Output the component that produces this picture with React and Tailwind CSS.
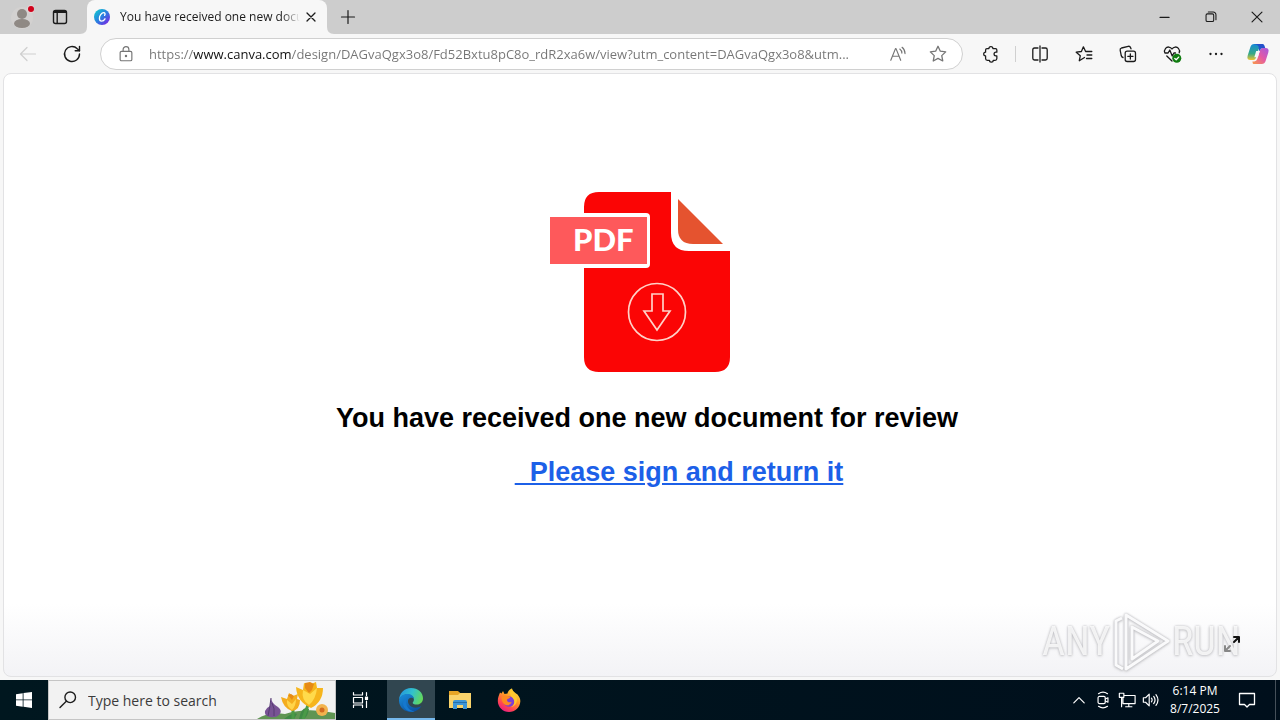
import React from "react";

const line = { fill: "none", stroke: "currentColor", strokeLinecap: "round", strokeLinejoin: "round" };

function Icon({ children, size = 20, width = 1.2, className = "" }) {
  return (
    <svg viewBox="0 0 20 20" width={size} height={size} strokeWidth={width} className={"shrink-0 " + className} aria-hidden="true" {...line}>
      {children}
    </svg>
  );
}

function IconButton({ label, className = "", children }) {
  return (
    <button type="button" aria-label={label} className={"flex shrink-0 items-center justify-center " + className}>
      {children}
    </button>
  );
}

function TabBar() {
  return (
    <header className="flex h-[34px] shrink-0 items-stretch bg-[#cdcdcd] text-[#1b1b1b]">
      <IconButton label="Profile" className="w-11">
        <svg viewBox="0 0 24 28" width="24" height="28" aria-hidden="true">
          <circle cx="12" cy="15" r="11" fill="#d3d1d0" />
          <circle cx="12" cy="11" r="5" fill="#8f8984" />
          <ellipse cx="12" cy="20.500" rx="8" ry="4.500" fill="#8f8984" />
          <circle cx="21" cy="6" r="4" fill="#e3d3d3" />
          <circle cx="21" cy="6" r="3" fill="#d0021b" />
        </svg>
      </IconButton>
      <IconButton label="Tab actions menu" className="w-[33px] pr-px">
        <Icon width={1.4}>
          <rect x="3.500" y="3.500" width="13" height="13" rx="2" />
          <path d="M4 5h12" strokeWidth="2" />
          <path d="M7.200 6v10" />
        </Icon>
      </IconButton>
      <div className="flex w-[260px] items-stretch">
        <svg viewBox="0 0 10 34" width="10" height="34" className="shrink-0" aria-hidden="true">
          <path d="M10 34H3q7 0 7-7z" fill="#f7f7f7" />
        </svg>
        <div className="flex flex-1 items-center rounded-t-lg bg-[#f7f7f7] pl-[7px]">
          <svg viewBox="0 0 16 16" width="16" height="16" className="shrink-0" aria-hidden="true">
            <defs>
              <linearGradient id="canva" x1="0" y1="0.200" x2="0.800" y2="1">
                <stop offset="0" stopColor="#12c2d1" />
                <stop offset="0.500" stopColor="#2b7de0" />
                <stop offset="1" stopColor="#7628e4" />
              </linearGradient>
            </defs>
            <circle cx="8" cy="8" r="8" fill="url(#canva)" />
            <path d="M10.600 6.400c.8-1 .6-2.700-.9-2.700-2.300 0-4.300 3-4.300 5.500 0 1.700.9 2.900 2.300 2.900 1.500 0 2.600-1.100 3.300-2.300" fill="none" stroke="#fff" strokeWidth="1.300" strokeLinecap="round" />
          </svg>
          <span className="ml-2.5 w-[180px] overflow-hidden whitespace-nowrap [mask-image:linear-gradient(90deg,#000_90%,transparent)] font-['Open_Sans','Noto_Sans',sans-serif] text-[12px] leading-4">
            You have received one new docum
          </span>
          <IconButton label="Close tab" className="ml-px h-5 w-5">
            <Icon size={16} width={1.6}><path d="M5 5l10 10M15 5L5 15" /></Icon>
          </IconButton>
        </div>
        <svg viewBox="0 0 10 34" width="10" height="34" className="shrink-0" aria-hidden="true">
          <path d="M0 34h7q-7 0-7-7z" fill="#f7f7f7" />
        </svg>
      </div>
      <IconButton label="New tab" className="w-[22px]">
        <Icon><path d="M3.500 10h13M10 3.500v13" /></Icon>
      </IconButton>
      <div className="ml-auto flex">
        <IconButton label="Minimize" className="w-[46px]">
          <Icon size={18} width={1.3}><path d="M4.500 10.500h10" /></Icon>
        </IconButton>
        <IconButton label="Restore" className="w-[46px]">
          <Icon size={18} width={1.2}>
            <rect x="4.500" y="6.500" width="8.500" height="8.500" rx="1.500" />
            <path d="M7 4.500h5.500a3 3 0 0 1 3 3V13" />
          </Icon>
        </IconButton>
        <IconButton label="Close" className="w-[46px]">
          <Icon size={18} width={1.3}><path d="M4.500 4.500l11 11M15.500 4.500l-11 11" /></Icon>
        </IconButton>
      </div>
    </header>
  );
}

const star = "M10 2.300l2.350 4.900 5.350.7-3.950 3.700 1 5.350L10 14.400l-4.750 2.550 1-5.350L2.300 7.900l5.350-.7z";

function Toolbar() {
  return (
    <nav className="flex h-[39px] shrink-0 items-center bg-[#f7f7f7] pt-px text-[#1b1b1b]">
      <IconButton label="Back" className="ml-1.5 w-11 text-[#cfcfcf]">
        <Icon><path d="M17.500 10h-15M9 3.500L2.500 10 9 16.500" /></Icon>
      </IconButton>
      <IconButton label="Refresh" className="w-11">
        <Icon width={1.4}>
          <path d="M17.500 10a7.500 7.500 0 1 1-2.200-5.300l2.200 2.100" />
          <path d="M17.500 2.500v4.300h-4.300" />
        </Icon>
      </IconButton>
      <div className="ml-1.5 flex h-8 min-w-0 flex-1 items-center rounded-full border border-[#d0d0d0] bg-white text-[#757575]">
        <IconButton label="View site information" className="ml-[15px] w-5">
          <Icon size={18} width={1.3}>
            <rect x="3.500" y="7" width="13" height="10.500" rx="1.500" />
            <path d="M6.800 7V5a3.200 3.200 0 0 1 6.400 0v2" />
            <circle cx="10" cy="12.300" r=".7" fill="currentColor" />
          </Icon>
        </IconButton>
        <input
          type="text"
          aria-label="Address"
          readOnly
          value="https://www.canva.com/design/DAGvaQgx3o8/Fd52Bxtu8pC8o_rdR2xa6w/view?utm_content=DAGvaQgx3o8&utm..."
          className="ml-[13px] min-w-0 flex-1 bg-[linear-gradient(90deg,#757575_44px,#111_44px,#111_142px,#757575_142px)] bg-clip-text font-['Open_Sans','Noto_Sans',sans-serif] text-[13px] leading-5 text-transparent outline-none"
        />
        <IconButton label="Read aloud" className="w-10">
          <Icon size={18} width={1.3}>
            <path d="M2 17L7.200 4h.6L13 17M4 12.500h7" />
            <path d="M12 4.500q2.300 1.800 2.300 4.500M14.500 2.500q3.300 2.600 3.300 7" />
          </Icon>
        </IconButton>
        <IconButton label="Add this page to favorites" className="mr-1 w-10">
          <Icon width={1.3}><path d={star} /></Icon>
        </IconButton>
      </div>
      <IconButton label="Extensions" className="ml-1.5 w-11">
        <Icon size={18} width={1.4}>
          <path d="M5.500 4h2.200a2.200 2.200 0 0 1 4.400 0H15q1.500 0 1.500 1.500V8h-1a2.100 2.100 0 0 0 0 4.200h1V15q0 2-2 2h-2a2.100 2.100 0 0 1-4.200 0H6q-2 0-2-2v-2.800a2.100 2.100 0 0 1 0-4.200V5.500q0-1.500 1.500-1.500z" />
        </Icon>
      </IconButton>
      <span className="ml-0.5 h-4 w-px bg-[#d0d0d0]" />
      <IconButton label="Split screen" className="ml-0.5 w-11">
        <Icon width={1.3}>
          <path d="M10 2v16M8 4H4.500Q2.800 4 2.800 5.700v8.600Q2.800 16 4.500 16H8M12 4h3.500q1.700 0 1.700 1.700v8.600q0 1.700-1.700 1.700H12" />
        </Icon>
      </IconButton>
      <IconButton label="Favorites" className="w-11">
        <Icon width={1.3}>
          <path d="M10.500 13.500L5.300 16.700l1-5L2.200 8.200l5.200-.7 2-4.700 2.200 4.700h6.200M13 11h4.800M12.500 14.500h5.300" />
        </Icon>
      </IconButton>
      <IconButton label="Collections" className="w-11">
        <Icon width={1.3}>
          <rect x="7.200" y="7.200" width="10.300" height="10.300" rx="2" />
          <path d="M12.350 9.800v5.200M9.800 12.350H15M5 13.500q-1.300-.3-1.700-1.700L2.200 6.300q-.4-1.800 1.300-2.300l6.700-1.700q1.700-.4 2.300 1.200l.5 1.300" />
        </Icon>
      </IconButton>
      <IconButton label="Browser essentials" className="w-11">
        <Icon width={1.3}>
          <path d="M10 5C8.500 2.600 5.200 2.400 3.600 4.300 2.400 5.800 2.200 7.600 2.900 9h3.200l1.700-3 2.400 6 1.700-3h1.600M4.800 12L10 17M10 5c1.500-2.400 4.800-2.600 6.400-.7 1.200 1.400 1.400 3.100.8 4.500" />
          <circle cx="14.800" cy="14.300" r="4.500" fill="#107c10" stroke="none" />
          <path d="M12.800 14.500l1.400 1.300 2.500-2.700" stroke="#fff" />
        </Icon>
      </IconButton>
      <IconButton label="Settings and more" className="w-11">
        <Icon>
          <g fill="currentColor" stroke="none"><circle cx="4.500" cy="10" r="1.150" /><circle cx="10" cy="10" r="1.150" /><circle cx="15.500" cy="10" r="1.150" /></g>
        </Icon>
      </IconButton>
      <IconButton label="Copilot" className="w-[42px] pr-0.5">
        <svg viewBox="0 0 24 24" width="24" height="24" aria-hidden="true">
          <defs>
            <linearGradient id="cop-a" x1="0" y1="0" x2="0" y2="1">
              <stop offset="0" stopColor="#158bd6" /><stop offset="0.600" stopColor="#35a987" /><stop offset="1" stopColor="#f0c530" />
            </linearGradient>
            <linearGradient id="cop-b" x1="1" y1="0" x2="0" y2="1">
              <stop offset="0" stopColor="#a35be0" /><stop offset="0.500" stopColor="#e45aa4" /><stop offset="1" stopColor="#f99a45" />
            </linearGradient>
          </defs>
          <path d="M16.500 2H8.200Q5.300 2 4.400 5L1.700 13.500Q.4 18 4.500 18h2.800q2 0 2.700-2.200L12.700 7q.8-2.400 3-2.400h1.900Q17.300 2 16.500 2z" fill="url(#cop-a)" />
          <path d="M7.500 22h8.300q2.900 0 3.800-3l2.700-8.500Q23.600 6 19.500 6h-2.800q-2 0-2.700 2.200L11.300 17q-.8 2.400-3 2.400H6.400Q6.700 22 7.500 22z" fill="url(#cop-b)" />
          <path d="M8.200 2h8.300q1.600 0 2.100 2l.6 2h-2.500q-2 0-2.700 2.200l-.4 1.200L12.700 7q.8-2.500-1.500-4z" fill="#2452cb" />
          <path d="M10.200 9h3.600l-1.900 6.300H8.300z" fill="#f7f7f7" />
        </svg>
      </IconButton>
    </nav>
  );
}

function PdfIcon() {
  return (
    <svg viewBox="0 0 180 182" width="180" height="182" role="img" aria-label="PDF document">
      <path d="M34 16Q34 1 49 1h72v41q0 18 18 18h41v106q0 15-15 15H49q-15 0-15-15z" fill="#fb0505" />
      <path d="M128 8l45 45h-30q-15 0-15-15z" fill="#e5532f" />
      <path d="M0 22h96q4 0 4 4v47q0 4-4 4H0z" fill="#fff" />
      <path d="M0 26h97v47H0z" fill="#fe595b" />
      <text x="23" y="60" fill="#fff" fontSize="31" fontWeight="900" fontFamily="Lato, sans-serif">PDF</text>
      <circle cx="107" cy="121" r="28.500" fill="none" stroke="#ffd2c8" strokeWidth="1.700" />
      <path d="M102 103h11v17h7l-13 19-13-19h8z" fill="none" stroke="#ffd2c8" strokeWidth="1.700" />
    </svg>
  );
}

function Watermark() {
  return (
    <div className="pointer-events-none absolute right-9 bottom-0.5 flex h-16 items-center font-['Roboto_Condensed','Liberation_Sans_Narrow','Roboto',sans-serif] text-[40px] leading-none font-normal text-white/80 [filter:drop-shadow(0_0_1px_#b4b4b8)_drop-shadow(0_1px_1px_#d3d3d6)]">
      <span className="w-[68px] text-right">ANY</span>
      <svg viewBox="0 0 62 64" width="62" height="64" fill="none" strokeLinejoin="round" aria-hidden="true">
        <path d="M16 5l42 26-42 28zM22 17v32l26-18zM12 8L6 11v44l7 4" stroke="#fafafb" strokeWidth="3" />
      </svg>
      <span className="w-[68px]">RUN</span>
    </div>
  );
}

function Page() {
  return (
    <div className="flex flex-1 flex-col bg-[#f7f7f7] px-[3px] pb-[3px]">
      <main className="relative flex flex-1 flex-col items-center rounded-lg border border-[#e2e2e4] bg-[linear-gradient(#fff_88%,#f3f3f6)] pt-[117px] font-['Liberation_Sans',Arial,sans-serif] text-[27px] leading-8 font-bold">
        <PdfIcon />
        <h1 className="mt-[29px] ml-3.5 text-black">You have received one new document for review</h1>
        <a href="#document" className="mt-[22px] ml-[78px] whitespace-pre text-[#1c60e8] underline decoration-2 underline-offset-2">{"\u00a0\u00a0Please sign and return it"}</a>
        <Watermark />
        <IconButton label="Full screen" className="absolute right-8 bottom-5 h-6 w-6 text-[#111]">
          <Icon width={2}>
            <path d="M12 8l5-5M12 3h5v5" />
            <path d="M8 12l-5 5M8 17H3v-5" stroke="#888" />
          </Icon>
        </IconButton>
      </main>
    </div>
  );
}

function Flowers() {
  return (
    <svg viewBox="0 0 78 38" width="78" height="38" className="shrink-0 self-end" aria-hidden="true">
      <path d="M0 38q12-8 28-5 22-7 50-1v6z" fill="#609553" />
      <path d="M27 38q10-8 13-5l-3 5zM42 38q3-14 10-10-1 7-5 10z" fill="#3f8a45" />
      <path d="M36 28v10M51 24q-3 8-5 14" stroke="#4a9a47" strokeWidth="3" fill="none" />
      <path d="M14 17q1 6 7 9 5 4 1 8-3 3-9 2-6-1-5-6 1-3 5-5z" fill="#785394" />
      <path d="M14 17q-1 9-3 18M15 22q3 5 2 13" stroke="#563c73" fill="none" />
      <path d="M24 16l6 2 2-6 4 3 5-2-1 5 3 1q0 10-8 11-9-3-11-14z" fill="#f4ad1e" />
      <path d="M30 19q-1 6 5 10 4-4 4-11l-4 5z" fill="#ffd449" />
      <path d="M31 14l3-1 3 2-2 4z" fill="#e68a16" />
      <path d="M39 6l7 3 1-7 5 2 7-3 1 6 6 0q0 14-12 20-14-6-15-21z" fill="#f6b51c" />
      <path d="M46 9q-2 10 6 15 7-6 8-17l-7 6z" fill="#ffda4b" />
      <path d="M48 2l5-1 4 2-2 6-3 3-4-5z" fill="#e68a16" />
      <circle cx="65" cy="29" r="6" fill="#f2b34e" /><circle cx="65" cy="29" r="2.500" fill="#d36b20" />
    </svg>
  );
}

function Taskbar() {
  return (
    <footer className="flex h-10 shrink-0 items-stretch bg-[linear-gradient(90deg,#00171f,#000f1c)] text-white">
      <IconButton label="Start" className="w-12">
        <svg viewBox="0 0 16 16" width="16" height="16" fill="#fff" aria-hidden="true">
          <path d="M0 2.200l6.700-1v6.300H0zM7.500 1.100L16 0v7.500H7.500zM0 8.300h6.700v6.400L0 13.800zM7.500 8.300H16V16l-8.500-1.200z" />
        </svg>
      </IconButton>
      <label className="flex w-72 items-center border border-[#c5c5c5] bg-[#f2f2f2] text-[#1d1d1d]">
        <Icon className="ml-[9px]" width={1.4}>
          <circle cx="12.200" cy="7.300" r="5.300" />
          <path d="M8.300 11.200L2 17.500" />
        </Icon>
        <input
          type="text"
          aria-label="Search"
          placeholder="Type here to search"
          className="ml-2.5 min-w-0 flex-1 bg-transparent pt-0.5 font-['Open_Sans','Noto_Sans',sans-serif] text-[14px] leading-5 outline-none placeholder:text-[#3b3b3b]"
        />
        <Flowers />
      </label>
      <IconButton label="Task view" className="w-[51px] pr-1">
        <Icon width={1.200}>
          <path d="M3.500 2.500v2.500h9V2.500M3.500 17.500V15h9v2.500M3.500 7.500h9v5.500h-9zM16.500 2.500v3M16.500 11v6.500" />
          <path d="M15.500 7h2v2.500h-2z" fill="currentColor" />
        </Icon>
      </IconButton>
      <IconButton label="Microsoft Edge" className="w-12 border-b-2 border-[#76b9ed] bg-[#314650] pt-0.5">
        <svg viewBox="0 0 24 24" width="24" height="24" aria-hidden="true">
          <defs>
            <linearGradient id="edge-a" x1="0" y1="0.300" x2="1" y2="0.600">
              <stop offset="0" stopColor="#2395df" /><stop offset="0.500" stopColor="#32c1cd" /><stop offset="1" stopColor="#65d957" />
            </linearGradient>
            <linearGradient id="edge-b" x1="0" y1="0" x2="0.700" y2="1">
              <stop offset="0" stopColor="#1a8fdc" /><stop offset="1" stopColor="#0b4fa0" />
            </linearGradient>
          </defs>
          <path d="M0 12C.4 5 5.300 0 12 0c7 0 12 4.600 12 10.200 0 4-3 6.300-6.300 6.300-2.600 0-4-.9-4-1.800 0-.7 1.200-1.300 1.200-3.300C14.900 7.700 10 6 6.500 6.500 3.500 7 1.200 9 0 12z" fill="url(#edge-a)" />
          <path d="M0 12c1-4 4.500-6 8.500-6 3.700 0 6.300 2 6.400 5-.8-1-2-1.500-3.200-1.300-2.900.6-3.400 3.700-2 6.300 2.200 4.200 8 5 12.600 2.100C20.300 21.600 16.500 24 12 24 5.200 24-.3 18.800 0 12z" fill="url(#edge-b)" />
          <path d="M8 10.500C5.500 16 9 22.500 15.500 23.400 11 25.300 3.500 21 4 15c.2-2.100 1.800-3.700 4-4.500z" fill="#1578ce" />
        </svg>
      </IconButton>
      <IconButton label="File Explorer" className="w-[50px]">
        <svg viewBox="0 0 22 20" width="22" height="20" aria-hidden="true">
          <path d="M0 2h9l2 1h11v15H0z" fill="#f9d36b" />
          <path d="M0 1h9l2 2-2 2H0z" fill="#e6a526" />
          <path d="M4 19v-7q0-2 2-2h10q2 0 2 2v7h-4v-4H8v4z" fill="#3f96d6" />
          <path d="M4 12.500h14" stroke="#246fab" />
        </svg>
      </IconButton>
      <IconButton label="Firefox" className="w-12">
        <svg viewBox="0 0 24 24" width="24" height="24" aria-hidden="true">
          <defs>
            <linearGradient id="ff" x1="0.800" y1="0" x2="0.200" y2="1">
              <stop offset="0" stopColor="#ffe740" /><stop offset="0.400" stopColor="#ff9a27" /><stop offset="0.750" stopColor="#ff4055" /><stop offset="1" stopColor="#e5178b" />
            </linearGradient>
          </defs>
          <path d="M3 4.500l1.500 1L6 3l1.500 3 3-.5C11 3 13 1 15 .5c0 2.500 2 3 4 5l1.500 1C22.500 9 23.500 11 23.300 13.500 23 19.500 18 24 12 24S.8 19.200.8 13C.8 9.500 2 7 3 4.500z" fill="url(#ff)" />
          <circle cx="12" cy="13.500" r="5.300" fill="#7d3fd6" />
          <path d="M4.500 9q3-2.500 6-1l3 .8q-.5 1.700-3 2.200-1 1 0 2.400 2 1.700 4.300.3-1.500 4.400-5.800 3.500Q4.500 15.500 4.500 9z" fill="#ff8a1f" />
          <path d="M15 .5c0 3 5.500 6 5 12-.4 3-2.500 6-6 6.500 3-1.500 4-4 3-7-1-3-4.500-4-4-8 .2-1.300 1-2.700 2-3.500z" fill="#ffc72e" />
        </svg>
      </IconButton>
      <div className="ml-auto flex items-stretch">
        <IconButton label="Show hidden icons" className="w-6"><Icon size={16} width={1.500}><path d="M3.500 13.500L10 7l6.500 6.500" /></Icon></IconButton>
        <IconButton label="Meet Now" className="w-6">
          <Icon size={18} width={1.300}>
            <rect x="4.500" y="6" width="8" height="8" rx="1.500" /><path d="M12.500 9l3-1.500v5l-3-1.500M5 3q5-3.500 10 0M5 17q5 3.500 10 0" />
          </Icon>
        </IconButton>
        <IconButton label="Network" className="w-6">
          <Icon size={18} width={1.300}><path d="M6.500 5H19v9H5.500V8M12 14v3.500M8.500 17.500h7M1.500 2.500h5V7h-5zM4 7v10.500" /></Icon>
        </IconButton>
        <IconButton label="Volume" className="w-6">
          <Icon size={18} width={1.300}><path d="M1.500 7.500H4l4-4v13l-4-4H1.500zM10.500 8q1.500 2 0 4M13 6q3 4 0 8M15.500 4q4.500 6 0 12" /></Icon>
        </IconButton>
        <div className="flex w-16 flex-col items-center justify-center font-['Open_Sans','Noto_Sans',sans-serif] text-[12px] leading-[18px] whitespace-nowrap">
          <span>6:14 PM</span>
          <span>8/7/2025</span>
        </div>
        <IconButton label="Notifications" className="w-10">
          <Icon width={1.300}><path d="M2.500 3.500h15v11h-5L10 17l-2.500-2.500h-5z" /></Icon>
        </IconButton>
        <span className="ml-2 w-[5px] border-l border-[#45505a]" />
      </div>
    </footer>
  );
}

export default function App() {
  return (
    <div className="flex min-h-screen flex-col">
      <TabBar />
      <Toolbar />
      <Page />
      <Taskbar />
    </div>
  );
}
